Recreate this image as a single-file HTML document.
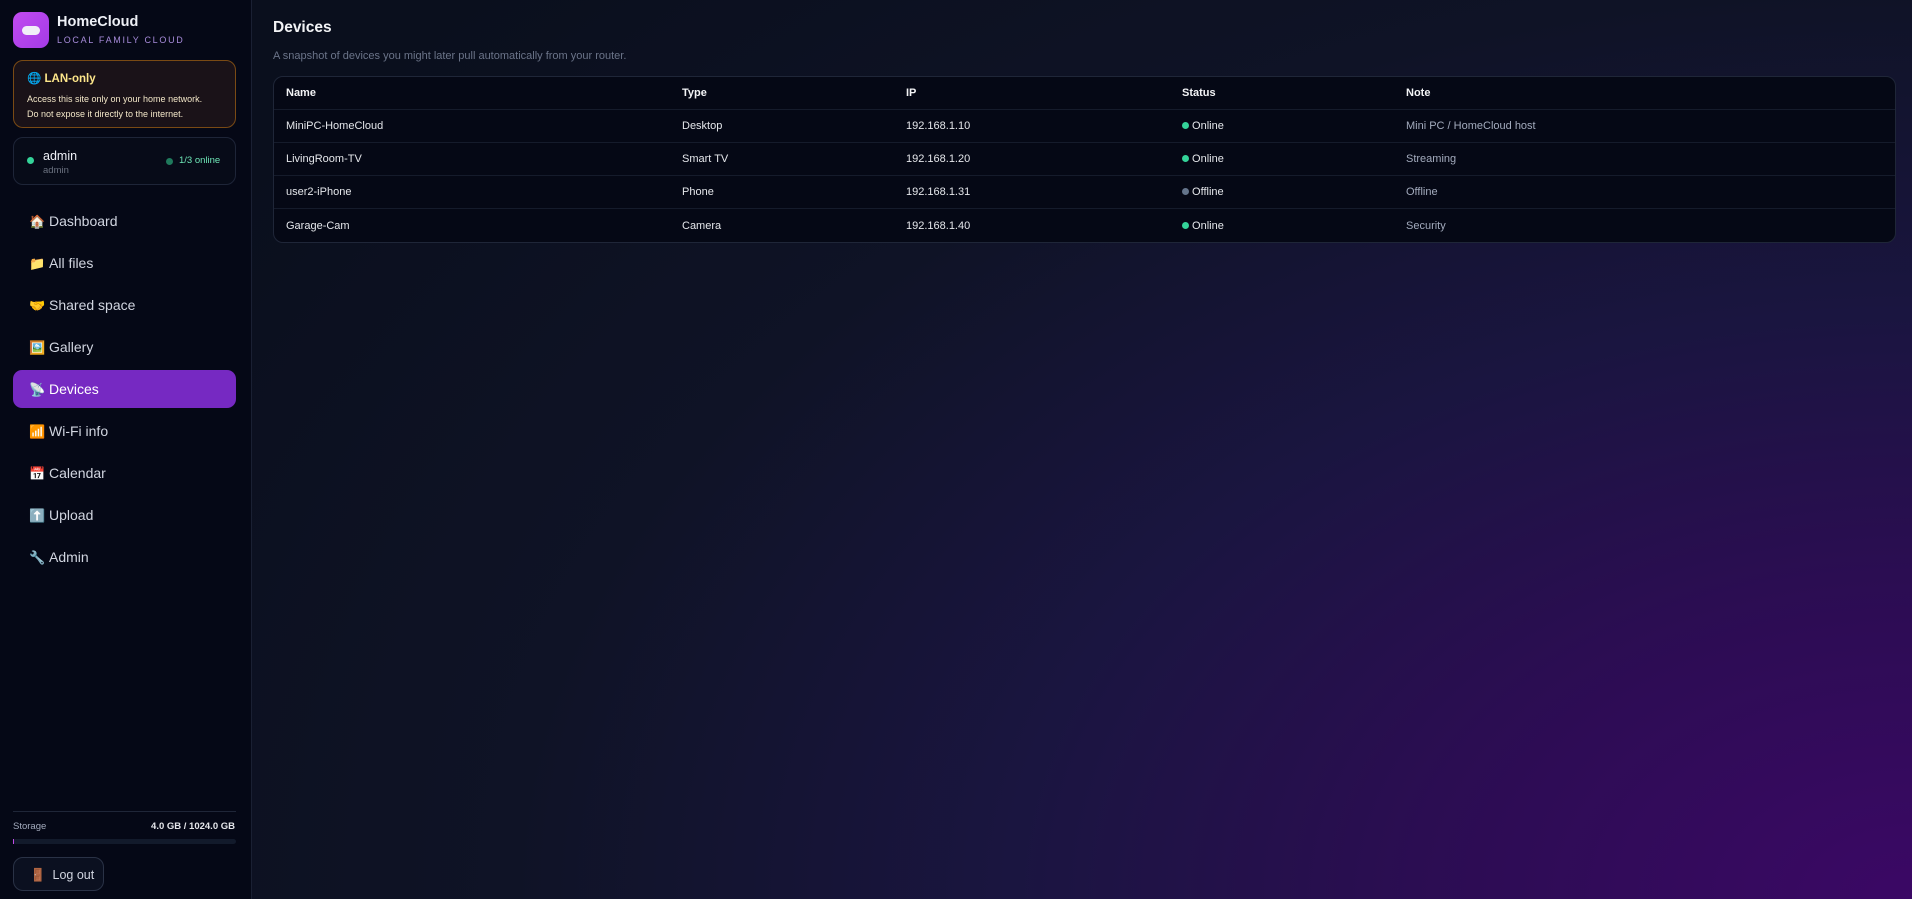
<!DOCTYPE html>
<html><head><meta charset="utf-8"><style>
*{box-sizing:border-box;margin:0;padding:0}
html,body{width:1912px;height:899px;overflow:hidden}
body{font-family:"Liberation Sans","Noto Sans CJK SC",sans-serif;background:radial-gradient(ellipse 2000px 1300px at 100% 100%,#3b0865 0%,#2b0d52 25%,#1a1540 45%,#0f1326 70%,#0a0f1d 100%);color:#e5e7eb;position:relative}
.side{position:absolute;left:0;top:0;width:252px;height:899px;background:#050816;border-right:1px solid #1a2033}
.logo{position:absolute;left:13px;top:12px;width:36px;height:36px;border-radius:9px;background:linear-gradient(135deg,#c24bf0,#a43be6)}
.logo:after{content:"";position:absolute;left:9px;top:14px;width:18px;height:9px;border-radius:6px;background:#f1eef8}
.t1{position:absolute;left:57px;top:14px;font-size:14.5px;font-weight:bold;color:#eef0f6}
.t2{position:absolute;left:57px;top:35px;font-size:9px;letter-spacing:1.7px;color:#a78bda}
.lan{position:absolute;left:13px;top:60px;width:223px;height:68px;border:1px solid #7a4a14;border-radius:10px;background:#1a1218}
.lan b{position:absolute;left:13px;top:10px;font-size:11.5px;color:#fde68a}
.lan p{position:absolute;left:13px;top:31px;font-size:9px;line-height:15px;color:#f3e7c8}
.user{position:absolute;left:13px;top:137px;width:223px;height:48px;border:1px solid #1e2538;border-radius:10px;background:#070b18}
.dot{display:inline-block;width:7px;height:7px;border-radius:50%;background:#34d399}
.nav{position:absolute;left:13px;width:223px;height:38px;border-radius:9px;font-size:14px;color:#d1d5e0;padding:11px 0 0 16px}
.nav.a{background:#7629c2;color:#fff}
.nav span{display:inline-block;width:20px;font-size:13px}
.main h1{position:absolute;left:273px;top:19px;font-size:15.5px;color:#f3f4f6}
.sub{position:absolute;left:273px;top:50px;font-size:11px;color:#6b7489}
table{position:absolute;left:273px;top:76px;width:1623px;border-collapse:separate;border-spacing:0;border:1px solid #1f2638;border-radius:10px;background:#050815;font-size:11px;overflow:hidden}
td,th{height:33px;text-align:left;padding-left:12px;border-bottom:1px solid #151b2b;color:#e5e7eb;font-weight:normal}
th{font-weight:bold;color:#f3f4f6}
tr:last-child td{border-bottom:none}
td.n{color:#a3abbd}
</style></head><body>
<div class="side">
<div class="logo"></div>
<div class="t1">HomeCloud</div>
<div class="t2">LOCAL FAMILY CLOUD</div>
<div class="lan"><b>🌐 LAN-only</b><p>Access this site only on your home network.<br>Do not expose it directly to the internet.</p></div>
<div class="user">
<span class="dot" style="position:absolute;left:13px;top:19px"></span>
<div style="position:absolute;left:29px;top:11px;font-size:12.5px;color:#eef0f6">admin</div>
<div style="position:absolute;left:29px;top:27px;font-size:9.5px;color:#6b7280">admin</div>
<span class="dot" style="position:absolute;left:152px;top:20px;background:#1f7a5c"></span>
<div style="position:absolute;left:165px;top:17px;font-size:9.5px;color:#6ee7b7">1/3 online</div>
</div>
<div class="nav" style="top:202px"><span>🏠</span>Dashboard</div>
<div class="nav" style="top:244px"><span>📁</span>All files</div>
<div class="nav" style="top:286px"><span>🤝</span>Shared space</div>
<div class="nav" style="top:328px"><span>🖼️</span>Gallery</div>
<div class="nav a" style="top:370px"><span>📡</span>Devices</div>
<div class="nav" style="top:412px"><span>📶</span>Wi-Fi info</div>
<div class="nav" style="top:454px"><span>📅</span>Calendar</div>
<div class="nav" style="top:496px"><span>⬆️</span>Upload</div>
<div class="nav" style="top:538px"><span>🔧</span>Admin</div>
<div style="position:absolute;left:13px;top:811px;width:223px;height:1px;background:#1f2638"></div>
<div style="position:absolute;left:13px;top:821px;font-size:9.5px;color:#a3abbd">Storage</div>
<div style="position:absolute;right:16px;top:821px;font-size:9.5px;font-weight:bold;color:#e5e7eb">4.0 GB / 1024.0 GB</div>
<div style="position:absolute;left:13px;top:839px;width:223px;height:5px;border-radius:3px;background:#121a2b"><div style="width:1px;height:5px;background:#c04be8"></div></div>
<div style="position:absolute;left:13px;top:857px;width:91px;height:34px;border:1px solid #2a3246;border-radius:10px;background:#0b1020;font-size:12.5px;color:#d1d5e0;padding:10px 0 0 16px">🚪&nbsp;&nbsp;Log out</div>
</div>
<div class="main">
<h1>Devices</h1>
<div class="sub">A snapshot of devices you might later pull automatically from your router.</div>
<table>
<tr><th style="width:396px">Name</th><th style="width:224px">Type</th><th style="width:276px">IP</th><th style="width:224px">Status</th><th>Note</th></tr>
<tr><td>MiniPC-HomeCloud</td><td>Desktop</td><td>192.168.1.10</td><td><span class="dot"></span> Online</td><td class="n">Mini PC / HomeCloud host</td></tr>
<tr><td>LivingRoom-TV</td><td>Smart TV</td><td>192.168.1.20</td><td><span class="dot"></span> Online</td><td class="n">Streaming</td></tr>
<tr><td>user2-iPhone</td><td>Phone</td><td>192.168.1.31</td><td><span class="dot" style="background:#64748b"></span> Offline</td><td class="n">Offline</td></tr>
<tr><td>Garage-Cam</td><td>Camera</td><td>192.168.1.40</td><td><span class="dot"></span> Online</td><td class="n">Security</td></tr>
</table>
</div>
</body></html>
